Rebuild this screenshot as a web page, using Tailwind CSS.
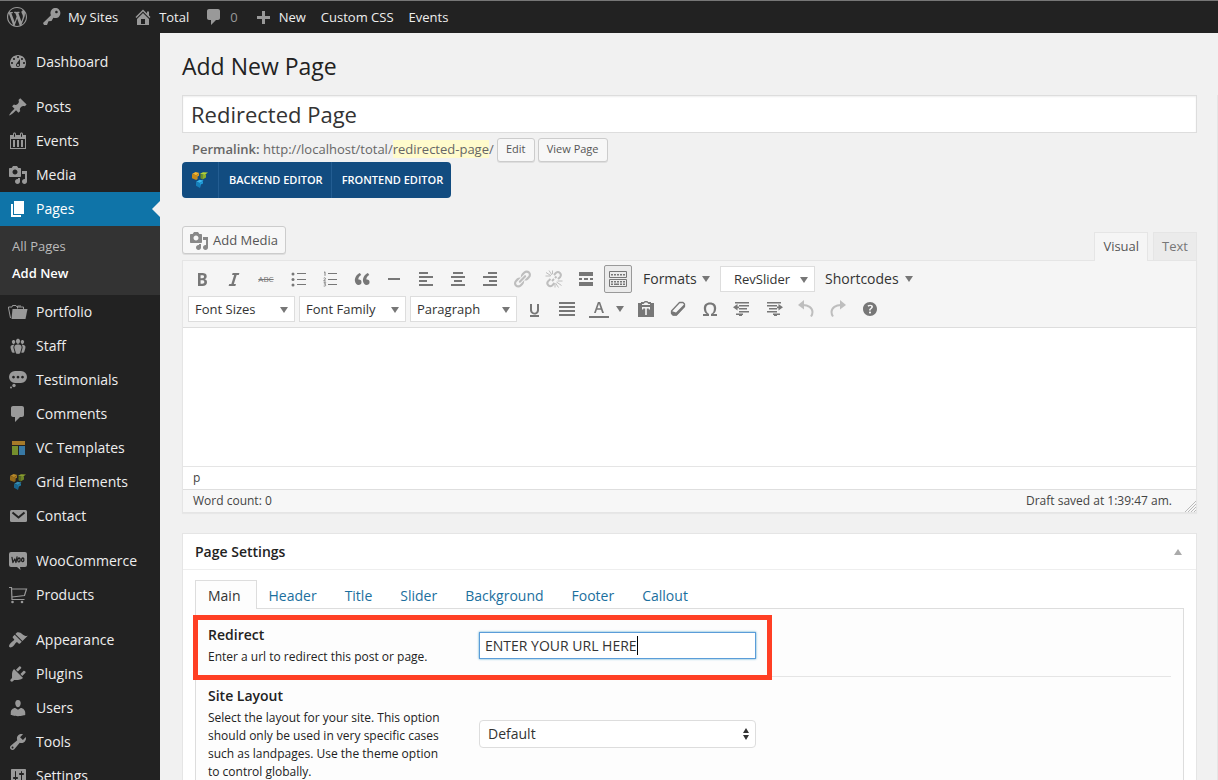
<!DOCTYPE html>
<html lang="en">
<head>
<meta charset="utf-8">
<meta name="viewport" content="width=device-width, initial-scale=1">
<title>Add New Page</title>
<script src="https://cdn.jsdelivr.net/npm/@tailwindcss/browser@4"></script>
</head>
<body class="h-screen overflow-hidden bg-[#f1f1f1] font-['Open_Sans',sans-serif] text-[13px] text-[#444] flex flex-col">

<svg class="hidden" aria-hidden="true">
  <symbol id="i-media" viewBox="0 0 20 20"><path fill-rule="evenodd" d="M13 11V4c0-.55-.45-1-1-1h-1.670L9 1H5L3.670 3H2c-.55 0-1 .45-1 1v7c0 .55.45 1 1 1h10c.55 0 1-.45 1-1zM7 4.500c1.380 0 2.500 1.120 2.500 2.500S8.380 9.500 7 9.500 4.500 8.380 4.500 7 5.620 4.500 7 4.500zM14 6h5v10.500c0 1.380-1.120 2.500-2.500 2.500S14 17.880 14 16.500s1.120-2.500 2.500-2.500c.17 0 .34.02.5.05V9h-3V6zm-4 8.050V13h2v3.500c0 1.380-1.120 2.500-2.500 2.500S7 17.880 7 16.500 8.120 14 9.500 14c.17 0 .34.02.5.05z"/></symbol>
  <symbol id="i-comment" viewBox="0 0 20 20"><path d="M5 2h9c1.100 0 2 .9 2 2v7c0 1.100-.9 2-2 2h-2l-5 5v-5H5c-1.100 0-2-.9-2-2V4c0-1.100.9-2 2-2z"/></symbol>
  <symbol id="i-down" viewBox="0 0 10 8"><path d="M1 1h8L5 7z"/></symbol>
  <symbol id="i-vc" viewBox="0 0 20 20">
    <path fill="#f7b52c" d="M2 4l3.500-2L9.500 3 6.200 5.200z"/><path fill="#c98a17" d="M2 4l4.200 1.200V10L2 8.200z"/><path fill="#e09c1c" d="M6.200 5.200L9 3.400v2.400L7.500 6.600V9l-1.300 1z"/>
    <path fill="#b5d335" d="M10 3.800L13 2.200l5 .2L14.500 5z"/><path fill="#6f8f1f" d="M10.500 4L12.500 4.600v5l-2-1.400z"/><path fill="#8fae2a" d="M12.500 4.600l2 .4L16 4v3.500L12.500 9.600z"/>
    <path fill="#39b8ef" d="M6 12l3.500-2.200 4 .7L10 13z"/><path fill="#1580bb" d="M6 12l4 1v5l-4-2.200z"/><path fill="#1e9bd8" d="M10 13l3-2v2.500L10.800 14.500 10 18z"/>
  </symbol>
</svg>

<header class="shrink-0 h-[33px] bg-[#222] border-t border-[#777] flex items-center gap-[15px] pl-[7px] text-[13px] leading-[21px] font-medium text-[#eee]">
  <a href="#" aria-label="About WordPress" class="text-[#999]"><svg class="size-5 fill-current" viewBox="0 0 20 20"><path fill-rule="evenodd" d="M20 10c0-5.510-4.490-10-10-10C4.480 0 0 4.490 0 10c0 5.520 4.480 10 10 10 5.510 0 10-4.480 10-10zM7.780 15.370L4.370 6.220c.55-.02 1.170-.08 1.170-.08.5-.06.44-1.130-.06-1.110 0 0-1.450.11-2.370.11-.18 0-.37 0-.58-.01C4.120 2.690 6.870 1.110 10 1.110c2.330 0 4.450.87 6.050 2.340-.68-.11-1.650.39-1.650 1.580 0 .74.45 1.360.9 2.100.35.61.55 1.360.55 2.460 0 1.490-1.400 5-1.400 5l-3.030-8.370c.54-.02.82-.17.82-.17.5-.05.44-1.250-.06-1.220 0 0-1.440.12-2.380.12-.87 0-2.330-.12-2.330-.12-.5-.03-.56 1.200-.06 1.220l.92.08 1.260 3.410zM17.410 10c.24-.64.74-1.870.43-4.250.7 1.290 1.050 2.710 1.050 4.250 0 3.290-1.730 6.240-4.400 7.780.97-2.590 1.940-5.200 2.920-7.780zM6.100 18.090C3.120 16.650 1.110 13.530 1.110 10c0-1.300.23-2.480.72-3.590C3.250 10.300 4.670 14.200 6.100 18.090zm4.030-6.630l2.580 6.980c-.86.29-1.760.45-2.710.45-.79 0-1.570-.11-2.290-.33.81-2.380 1.620-4.740 2.420-7.100z"/></svg></a>
  <a href="#" class="flex items-center gap-1.5"><svg class="size-5 fill-[#999]" viewBox="0 0 20 20"><path fill-rule="evenodd" d="M16.950 2.580c1.960 1.950 1.960 5.120 0 7.070-1.510 1.510-3.750 1.840-5.590 1.010l-1.870 3.310-2.990.31L5 18H2l-1-2 7.950-7.690c-.92-1.870-.62-4.180.93-5.730 1.950-1.960 5.120-1.960 7.070 0zm-2.510 3.790c.74 0 1.330-.6 1.330-1.340 0-.73-.59-1.330-1.330-1.330-.73 0-1.330.6-1.330 1.330 0 .74.6 1.340 1.330 1.340z"/></svg>My Sites</a>
  <a href="#" class="flex items-center gap-1.5"><svg class="size-5 fill-[#999]" viewBox="0 0 20 20"><path fill-rule="evenodd" d="M16 8.500l1.530 1.530-1.060 1.060L10 4.600l-6.470 6.490-1.060-1.060L10 2.500l4 4v-2h2v4zm-6-2.460l6 5.990V18H4v-5.970zM12 17v-5H8v5h4z"/></svg>Total</a>
  <a href="#" class="flex items-center gap-1.5 text-[#999]"><svg class="size-5 fill-current" viewBox="0 0 20 20"><use href="#i-comment"/></svg>0</a>
  <a href="#" class="flex items-center gap-1.5"><svg class="size-5 fill-[#999]" viewBox="0 0 20 20"><path d="M9 4h3v5h5v3h-5v5H9v-5H4V9h5z"/></svg>New</a>
  <a href="#">Custom CSS</a>
  <a href="#">Events</a>
</header>

<div class="flex flex-1 min-h-0 overflow-hidden">
  <nav aria-label="Admin menu" class="w-40 shrink-0 bg-[#222] pt-3 text-[14px] leading-5 font-medium text-[#eee] fill-[#999]">
    <a href="#" class="flex items-center gap-2 h-[34px] pl-2"><svg class="size-5" viewBox="0 0 20 20"><path fill-rule="evenodd" d="M3.760 16h12.480c1.100-1.370 1.760-3.110 1.760-5 0-4.420-3.580-8-8-8s-8 3.580-8 8c0 1.890.66 3.630 1.760 5zM10 4c.55 0 1 .45 1 1s-.45 1-1 1-1-.45-1-1 .45-1 1-1zM6 6c.55 0 1 .45 1 1s-.45 1-1 1-1-.45-1-1 .45-1 1-1zm8 0c.55 0 1 .45 1 1s-.45 1-1 1-1-.45-1-1 .45-1 1-1zm-5.370 5.550L12 7v6c0 1.100-.9 2-2 2s-2-.9-2-2c0-.57.24-1.080.63-1.450zM4 10c.55 0 1 .45 1 1s-.45 1-1 1-1-.45-1-1 .45-1 1-1zm12 0c.55 0 1 .45 1 1s-.45 1-1 1-1-.45-1-1 .45-1 1-1zm-5 3c0-.55-.45-1-1-1s-1 .45-1 1 .45 1 1 1 1-.45 1-1z"/></svg>Dashboard</a>
    <a href="#" class="mt-[11px] flex items-center gap-2 h-[34px] pl-2"><svg class="size-5" viewBox="0 0 20 20"><path d="M10.440 3.020l1.820-1.820 6.360 6.350-1.830 1.820c-1.050-.68-2.480-.57-3.410.36l-.75.75c-.92.93-1.040 2.350-.35 3.410l-1.830 1.820-2.410-2.410-2.800 2.790c-.42.42-3.380 2.710-3.800 2.290s1.860-3.390 2.280-3.810l2.790-2.790L4.100 9.360l1.830-1.820c1.050.69 2.480.57 3.400-.36l.75-.75c.93-.92 1.050-2.350.36-3.410z"/></svg>Posts</a>
    <a href="#" class="flex items-center gap-2 h-[34px] pl-2"><svg class="size-5" viewBox="0 0 20 20"><path fill-rule="evenodd" d="M15 4h3v14H2V4h3V3c0-.83.67-1.500 1.500-1.500S8 2.170 8 3v1h4V3c0-.83.67-1.500 1.500-1.500S15 2.170 15 3v1zM6 3v2.500c0 .28.22.5.5.5s.5-.22.5-.5V3c0-.28-.22-.5-.5-.5S6 2.720 6 3zm7 0v2.500c0 .28.22.5.5.5s.5-.22.5-.5V3c0-.28-.22-.5-.5-.5s-.5.22-.5.5zm4 14V8H3v9h14zM7 16V9H5v7h2zm4 0V9H9v7h2zm4 0V9h-2v7h2z"/></svg>Events</a>
    <a href="#" class="flex items-center gap-2 h-[34px] pl-2"><svg class="size-5"><use href="#i-media"/></svg>Media</a>
    <a href="#" aria-current="page" class="relative flex items-center gap-2 h-[34px] pl-2 bg-[#0f74a8] text-white"><svg class="size-5 fill-white" viewBox="0 0 20 20"><path d="M6 15V2h10v13H6zm-1 1h8v2H3V5h2v11z"/></svg>Pages
      <svg class="absolute right-0 top-[9px] w-2 h-4 fill-[#f1f1f1]" viewBox="0 0 8 16"><path d="M8 0v16L0 8z"/></svg></a>
    <div class="bg-[#333] h-[69px] pt-[7px] pl-3 text-[13px] leading-[27px]">
      <a href="#" class="block text-[#bbb]">All Pages</a>
      <a href="#" class="block text-white font-semibold">Add New</a>
    </div>
    <a href="#" class="flex items-center gap-2 h-[34px] pl-2"><svg class="size-5" viewBox="0 0 20 20"><path d="M4.500 7H19.500L17.500 17H3.500z"/><path fill="none" stroke="#999" d="M2.500 16L.5 6V5H4l.5-1.500H8L9 5h6.500V7M9.500 6.500V4H13"/></svg>Portfolio</a>
    <a href="#" class="flex items-center gap-2 h-[34px] pl-2"><svg class="size-5" viewBox="0 0 20 20"><path d="M8.030 4.460c-.29 1.280.55 3.460 1.970 3.460 1.410 0 2.250-2.180 1.960-3.460-.22-.98-1.080-1.630-1.960-1.630-.89 0-1.740.65-1.970 1.630zm-4.130.9c-.25 1.080.47 2.930 1.670 2.930s1.920-1.850 1.670-2.930c-.19-.83-.92-1.390-1.670-1.390s-1.480.56-1.670 1.390zm8.860 0c-.25 1.080.47 2.930 1.660 2.930 1.200 0 1.920-1.850 1.670-2.930-.19-.83-.92-1.390-1.670-1.390-.74 0-1.470.56-1.660 1.390zm-.59 11.430l1.250-4.300C14.200 10 12.710 8.470 10 8.470c-2.720 0-4.210 1.530-3.440 4.020l1.260 4.300C8.050 17.510 9 18 10 18c.98 0 1.940-.49 2.170-1.210zm-6.100-7.630c-.49.67-.96 1.830-.42 3.590l1.120 3.790c-.34.2-.77.31-1.200.31-.85 0-1.650-.41-1.850-1.030l-1.070-3.650c-.65-2.110.61-3.400 2.920-3.400.27 0 .54.02.79.06-.1.1-.2.22-.29.33zm8.350-.39c2.310 0 3.580 1.290 2.920 3.400l-1.070 3.650c-.2.62-1 1.030-1.850 1.030-.43 0-.86-.11-1.200-.31l1.110-3.770c.55-1.780.08-2.940-.42-3.610-.08-.11-.18-.23-.28-.33.25-.04.51-.06.79-.06z"/></svg>Staff</a>
    <a href="#" class="flex items-center gap-2 h-[34px] pl-2"><svg class="size-5" viewBox="0 0 20 20"><path fill-rule="evenodd" d="M7 1h6a6 6 0 0 1 6 6 6 6 0 0 1-6 6H7a6 6 0 0 1-6-6 6 6 0 0 1 6-6zM5.500 5.700a1.400 1.400 0 1 0 .01 0zm4.500 0a1.400 1.400 0 1 0 .01 0zm4.500 0a1.400 1.400 0 1 0 .01 0z"/><circle cx="6" cy="15.500" r="1.700"/><circle cx="3" cy="17.500" r="1"/></svg>Testimonials</a>
    <a href="#" class="flex items-center gap-2 h-[34px] pl-2"><svg class="size-5"><use href="#i-comment"/></svg>Comments</a>
    <a href="#" class="flex items-center gap-2 h-[34px] pl-2"><svg class="size-5" viewBox="0 0 20 20"><path fill="#a57a29" d="M4 3h13v4H4z"/><path fill="#758f2d" d="M4 8h6v9H4z"/><path fill="#3879a5" d="M11 8h6v9h-6z"/></svg>VC Templates</a>
    <a href="#" class="flex items-center gap-2 h-[34px] pl-2"><svg class="size-5 opacity-70"><use href="#i-vc"/></svg>Grid Elements</a>
    <a href="#" class="flex items-center gap-2 h-[34px] pl-2"><svg class="size-5" viewBox="0 0 20 20"><rect x="2" y="4" width="17" height="12" rx="1.500"/><path fill="none" stroke="#222" stroke-width="2" d="M4.500 6.500l6 5 6-5"/></svg>Contact</a>
    <a href="#" class="mt-[11px] flex items-center gap-2 h-[34px] pl-2"><svg class="size-5" viewBox="0 0 20 20"><path d="M3 1h14a2 2 0 0 1 2 2v11a2 2 0 0 1-2 2h-5l.5 3L9 16H3a2 2 0 0 1-2-2V3a2 2 0 0 1 2-2z"/><path fill="none" stroke="#222" stroke-width="1.300" stroke-linecap="round" stroke-linejoin="round" d="M4 6.500l.9 5L6.800 8l1.200 3.500L9 6M11.300 7c-1.300 0-1.900 1.500-1.400 3 .5 1.300 1.900 1 2.200-.5.200-1.300 0-2.300-.8-2.500zM15 7c-1.300 0-1.700 1.500-1.300 2.700.5 1.300 1.900 1 2.100-.4.200-1.200 0-2.100-.8-2.300z"/></svg>WooCommerce</a>
    <a href="#" class="flex items-center gap-2 h-[34px] pl-2"><svg class="size-5" viewBox="0 0 20 20"><path fill="none" stroke="#999" stroke-width="1.200" d="M1 2.500h2.500L4 14.500h12.500M4 4h14.500l-2 6.500-12.500 1.500"/><circle cx="4.500" cy="17" r="1.300"/><circle cx="14" cy="17" r="1.300"/></svg>Products</a>
    <a href="#" class="mt-[11px] flex items-center gap-2 h-[34px] pl-2"><svg class="size-5" viewBox="0 0 20 20"><path d="M14.480 11.060L7.410 3.990l1.500-1.500c.5-.56 2.300-.47 3.510.32 1.210.8 1.430 1.280 2.910 2.100 1.180.64 2.450 1.260 4.450.85zm-.71.71L6.700 4.700 4.930 6.470c-.39.39-.39 1.020 0 1.410l1.060 1.060c.39.39.39 1.030 0 1.420-.6.6-1.430 1.110-2.210 1.690-.35.26-.7.53-1.010.84C1.430 14.230.4 16.080 1.400 17.070c.99 1 2.840-.03 4.180-1.360.31-.31.58-.66.85-1.020.57-.78 1.080-1.610 1.690-2.210.39-.39 1.020-.39 1.410 0l1.060 1.060c.39.39 1.020.39 1.410 0z"/></svg>Appearance</a>
    <a href="#" class="flex items-center gap-2 h-[34px] pl-2"><svg class="size-5" viewBox="0 0 20 20"><path d="M13.110 4.360L9.870 7.600 8 5.730l3.240-3.240c.35-.34 1.050-.2 1.560.32.52.51.66 1.210.31 1.550zm-8 1.770l.91-1.120 9.010 9.010-1.190.84c-.71.71-2.630 1.160-3.820 1.160H6.140L4.900 17.260c-.59.59-1.540.59-2.120 0-.59-.58-.59-1.530 0-2.120l1.240-1.240v-3.880c0-1.130.4-3.190 1.090-3.890zm7.260 3.970l3.240-3.240c.34-.35 1.040-.21 1.550.31.52.51.66 1.210.31 1.550l-3.240 3.250z"/></svg>Plugins</a>
    <a href="#" class="flex items-center gap-2 h-[34px] pl-2"><svg class="size-5" viewBox="0 0 20 20"><path d="M10 9.250c-2.270 0-2.730-3.440-2.730-3.440C7 4.020 7.820 2 9.970 2c2.160 0 2.980 2.020 2.710 3.810 0 0-.41 3.440-2.680 3.440zm0 2.570L12.720 10c2.390 0 4.520 2.330 4.520 4.530v2.490s-3.650 1.130-7.240 1.130c-3.650 0-7.240-1.130-7.240-1.130v-2.490c0-2.250 1.940-4.480 4.470-4.480z"/></svg>Users</a>
    <a href="#" class="flex items-center gap-2 h-[34px] pl-2"><svg class="size-5" viewBox="0 0 20 20"><path fill-rule="evenodd" d="M16.680 9.770c-1.340 1.340-3.300 1.670-4.950.99l-5.410 6.520c-.99.99-2.590.99-3.580 0s-.99-2.590 0-3.570l6.520-5.420c-.68-1.650-.35-3.610.99-4.950 1.280-1.280 3.120-1.620 4.720-1.060l-2.890 2.890 2.820 2.820 2.860-2.870c.53 1.580.18 3.390-1.080 4.650zM3.810 16.210c.4.39 1.040.39 1.430 0 .4-.4.4-1.040 0-1.430-.39-.4-1.030-.4-1.430 0-.39.39-.39 1.030 0 1.430z"/></svg>Tools</a>
    <a href="#" class="flex items-center gap-2 h-[34px] pl-2"><svg class="size-5" viewBox="0 0 20 20"><path fill-rule="evenodd" d="M18 16V4c0-.55-.45-1-1-1H4c-.55 0-1 .45-1 1v12c0 .55.45 1 1 1h13c.55 0 1-.45 1-1zM8 11h1c.55 0 1 .45 1 1s-.45 1-1 1H8v1.500c0 .28-.22.5-.5.5s-.5-.22-.5-.5V13H6c-.55 0-1-.45-1-1s.45-1 1-1h1V5.500c0-.28.22-.5.5-.5s.5.22.5.5V11zm5-2h-1c-.55 0-1-.45-1-1s.45-1 1-1h1V5.500c0-.28.22-.5.5-.5s.5.22.5.5V7h1c.55 0 1 .45 1 1s-.45 1-1 1h-1v5.500c0 .28-.22.5-.5.5s-.5-.22-.5-.5V9z"/></svg>Settings</a>
  </nav>

  <main class="flex-1 min-w-0 pl-[22px] pt-[18px]">
    <h1 class="text-[23px] leading-[30px] text-[#222] mb-[14px]">Add New Page</h1>
    <div class="flex gap-5">
      <div class="flex-1 min-w-0">
        <input type="text" aria-label="Page title" value="Redirected Page" class="block w-full h-[38px] px-2 bg-white border border-[#ddd] text-[22px] text-[#333] shadow-[inset_0_1px_2px_rgba(0,0,0,0.07)]">
        <div class="flex items-center h-[29px] pt-1 pl-2.5 text-[#666]">
          <span><strong class="font-semibold">Permalink:</strong> http://localhost/total/<span class="bg-[#fffbcc]">redirected-page</span>/</span>
          <button type="button" class="ml-[3px] h-6 min-w-[38px] px-2 rounded-[3px] border border-[#ccc] bg-[#f7f7f7] text-[11px] text-[#555] shadow-[0_1px_0_rgba(0,0,0,0.08)]">Edit</button>
          <button type="button" class="ml-[3px] h-6 px-2 rounded-[3px] border border-[#ccc] bg-[#f7f7f7] text-[11px] text-[#555] shadow-[0_1px_0_rgba(0,0,0,0.08)]">View Page</button>
        </div>
        <div class="inline-flex h-9 rounded-[4px] bg-[#124c80] text-white text-[11px] font-semibold overflow-hidden align-top">
          <a href="#" aria-label="Visual Composer" class="w-9 flex items-center justify-center"><svg class="size-5"><use href="#i-vc"/></svg></a>
          <button type="button" class="pl-2.5 pr-2 border-l border-[#235d92]">BACKEND EDITOR</button>
          <button type="button" class="pl-2.5 pr-2 border-l border-[#235d92]">FRONTEND EDITOR</button>
        </div>

        <div class="flex items-end justify-between h-[62px]">
          <button type="button" class="mb-[6px] h-7 flex items-center gap-1 pt-px pl-1.5 pr-[7px] rounded-[3px] border border-[#ccc] bg-[#f7f7f7] text-[13px] text-[#555] shadow-[0_1px_0_rgba(0,0,0,0.08)]"><svg class="size-5 fill-[#888]"><use href="#i-media"/></svg>Add Media</button>
          <div class="flex gap-[5px] text-[13px]">
            <button type="button" class="relative z-10 -mb-px h-[29px] px-2 border border-b-0 border-[#e5e5e5] bg-[#f5f5f5] text-[#555]">Visual</button>
            <button type="button" class="h-7 px-2 border border-b-0 border-[#e5e5e5] bg-[#ebebeb] text-[#777]">Text</button>
          </div>
        </div>

        <section aria-label="Editor" class="border border-[#e5e5e5] bg-white shadow-[0_1px_1px_rgba(0,0,0,0.04)]">
          <div class="flex flex-col gap-0.5 bg-[#f5f5f5] border-b border-[#ddd] py-1 pl-[5px] text-[13px] text-[#333] fill-[#777] stroke-[#777]">
            <div class="flex items-center gap-1 h-7">
              <button type="button" aria-label="Bold" class="size-7 grid place-items-center"><svg class="size-5" viewBox="0 0 20 20"><path stroke="none" fill-rule="evenodd" d="M6 4v13h4.540c1.370 0 2.460-.33 3.260-1 .8-.66 1.200-1.580 1.200-2.770 0-.84-.17-1.510-.51-2.010s-.9-.85-1.670-1.030v-.09c.57-.1 1.020-.4 1.360-.9s.51-1.130.51-1.910c0-1.140-.39-1.980-1.170-2.500C12.750 4.260 11.500 4 9.780 4H6zm2.570 5.150V6.260h1.360c.73 0 1.270.11 1.610.32.34.22.51.58.51 1.070 0 .54-.16.92-.47 1.150s-.82.35-1.510.35h-1.500zm0 2.190h1.600c1.440 0 2.160.53 2.160 1.610 0 .6-.17 1.050-.51 1.340s-.86.43-1.570.43H8.570v-3.380z"/></svg></button>
              <button type="button" aria-label="Italic" class="size-7 grid place-items-center"><svg class="size-5" viewBox="0 0 20 20"><path stroke="none" d="M14.780 6h-2.130l-2.800 9h2.120l-.62 2H4.600l.62-2h2.140l2.800-9H8.030l.62-2h6.750z"/></svg></button>
              <button type="button" aria-label="Strikethrough" class="size-7 text-[8px] font-medium text-[#777] line-through">ABC</button>
              <button type="button" aria-label="Bulleted list" class="size-7 grid place-items-center"><svg class="size-5" viewBox="0 0 20 20"><g stroke="none"><circle cx="5" cy="5" r="1.500"/><circle cx="5" cy="10.500" r="1.500"/><circle cx="5" cy="16" r="1.500"/><path d="M9 4h9v1H9zM9 10h9v1H9zM9 15h9v1H9z"/></g></svg></button>
              <button type="button" aria-label="Numbered list" class="size-7 grid place-items-center"><svg class="size-5" viewBox="0 0 20 20"><path stroke="none" d="M8 4h9v1H8zM8 10h9v1H8zM8 15h9v1H8z"/><path fill="none" stroke-width=".9" d="M4 3.500l1-.7v4M3.700 9.200c1-.9 2.200-.2 1.600.8L3.700 12h2.200M3.700 13.700h2L4.500 15.200c2 0 1.700 2.300-.8 1.800"/></svg></button>
              <button type="button" aria-label="Blockquote" class="size-7 grid place-items-center"><svg class="size-5" viewBox="0 0 20 20"><path stroke="none" d="M9.490 13.220c0-.74-.2-1.380-.61-1.900-.62-.78-1.830-.88-2.530-.72-.29-1.650 1.110-3.750 2.920-4.650L7.880 4c-2.730 1.300-5.420 4.280-4.960 8.050C3.210 14.430 4.590 16 6.540 16c.85 0 1.560-.25 2.120-.75s.83-1.180.83-2.030zm8.050 0c0-.74-.2-1.380-.61-1.900-.63-.78-1.830-.88-2.530-.72-.29-1.650 1.110-3.750 2.920-4.650L15.930 4c-2.730 1.300-5.410 4.280-4.950 8.050.29 2.380 1.660 3.950 3.610 3.950.85 0 1.560-.25 2.120-.75s.83-1.180.83-2.030z"/></svg></button>
              <button type="button" aria-label="Horizontal line" class="size-7 grid place-items-center"><svg class="size-5" viewBox="0 0 20 20"><path stroke="none" d="M4 9h12v2H4z"/></svg></button>
              <button type="button" aria-label="Align left" class="size-7 grid place-items-center"><svg class="size-5" viewBox="0 0 20 20"><path stroke="none" d="M3 3h9v2H3zM3 7h14v2H3zM3 11h8v2H3zM3 15h14v2H3z"/></svg></button>
              <button type="button" aria-label="Align center" class="size-7 grid place-items-center"><svg class="size-5" viewBox="0 0 20 20"><path stroke="none" d="M5 3h10v2H5zM3 7h14v2H3zM6 11h8v2H6zM3 15h14v2H3z"/></svg></button>
              <button type="button" aria-label="Align right" class="size-7 grid place-items-center"><svg class="size-5" viewBox="0 0 20 20"><path stroke="none" d="M8 3h9v2H8zM3 7h14v2H3zM9 11h8v2H9zM3 15h14v2H3z"/></svg></button>
              <button type="button" aria-label="Insert link" class="size-7 grid place-items-center fill-[#bebebe]"><svg class="size-5" viewBox="0 0 20 20"><path stroke="none" fill-rule="evenodd" d="M17.740 2.760c1.680 1.690 1.680 4.410 0 6.100l-1.530 1.520c-1.120 1.120-2.700 1.470-4.140 1.090l2.620-2.610.76-.77.76-.76c.84-.84.84-2.200 0-3.040-.84-.85-2.200-.85-3.040 0l-.77.76-3.380 3.380c-.37-1.440-.02-3.020 1.100-4.140l1.520-1.530c1.690-1.680 4.420-1.680 6.100 0zM8.590 13.430l5.340-5.340c.42-.42.42-1.100 0-1.520-.44-.43-1.130-.39-1.530 0l-5.330 5.340c-.42.42-.42 1.100 0 1.520.44.43 1.130.39 1.520 0zm-.76 2.290l4.140-4.150c.38 1.440.03 3.020-1.090 4.140l-1.520 1.530c-1.690 1.680-4.410 1.680-6.100 0-1.680-1.680-1.680-4.420 0-6.100l1.530-1.520c1.120-1.120 2.700-1.470 4.140-1.100l-4.140 4.150c-.85.84-.85 2.200 0 3.050.84.84 2.200.84 3.040 0z"/></svg></button>
              <button type="button" aria-label="Remove link" class="size-7 grid place-items-center stroke-[#bebebe]"><svg class="size-5" viewBox="0 0 20 20"><g fill="none"><path stroke-width="2" d="M10 6l2-2.200a3 3 0 0 1 4.200 4.200L14 10M6.500 10L4 12.300a3 3 0 0 0 4.200 4.200L10.500 14M8 12l2-2M11 9l1.500-1.500"/><path stroke-width="1" d="M2 3.500l5 3.200M5 1.500l3 4.500M8.500 1.500v3.500M1.500 7h5M11.500 14l3 4.500M12.500 13l5 3.500M13.500 12h5M11 15v3.500"/></g></svg></button>
              <button type="button" aria-label="Read more tag" class="size-7 grid place-items-center"><svg class="size-5" viewBox="0 0 20 20"><path stroke="none" d="M3 3h14v4H3zM3 9h3v2H3zM8 9h4v2H8zM14 9h3v2h-3zM3 13h14v4H3z"/></svg></button>
              <button type="button" aria-label="Toolbar toggle" aria-pressed="true" class="size-7 grid place-items-center border border-[#999] rounded-[2px] bg-[#ebebeb]"><svg class="size-5" viewBox="0 0 20 20"><path fill="none" d="M1.500 2.500h17v6h-17zM1.500 10.500h17v7h-17z"/><path stroke="none" d="M3 5h2v1.500H3zM6 5h2v1.500H6zM9 5h2v1.500H9zM12 5h2v1.500h-2zM15 5h2v1.500h-2zM3 12h2v1.500H3zM6 12h2v1.500H6zM9 12h2v1.500H9zM12 12h2v1.500h-2zM15 12h2v1.500h-2zM3 14.500h2V16H3zM6 14.500h5V16H6zM12 14.500h2V16h-2zM15 14.500h2V16h-2z"/></svg></button>
              <button type="button" class="w-20 h-7 flex items-center justify-between pl-[7px] pr-[5px] text-[14px] leading-5">Formats<svg class="w-2.5 h-2 stroke-none"><use href="#i-down"/></svg></button>
              <button type="button" class="w-[95px] h-[26px] flex items-center justify-between pt-0.5 pl-[13px] pr-[5px] border border-[#ddd] bg-white">RevSlider<svg class="w-2.5 h-2 stroke-none"><use href="#i-down"/></svg></button>
              <button type="button" class="w-[101px] h-7 flex items-center justify-between pl-1.5 pr-1.5 text-[14px] leading-5">Shortcodes<svg class="w-2.5 h-2 stroke-none"><use href="#i-down"/></svg></button>
            </div>
            <div class="flex items-center gap-1 h-7">
              <button type="button" class="w-[107px] h-[26px] flex items-center justify-between pt-0.5 pl-1.5 pr-[5px] border border-[#ddd] bg-white">Font Sizes<svg class="w-2.5 h-2 stroke-none"><use href="#i-down"/></svg></button>
              <button type="button" class="w-[107px] h-[26px] flex items-center justify-between pt-0.5 pl-1.5 pr-[5px] border border-[#ddd] bg-white">Font Family<svg class="w-2.5 h-2 stroke-none"><use href="#i-down"/></svg></button>
              <button type="button" class="w-[107px] h-[26px] flex items-center justify-between pt-0.5 pl-1.5 pr-[5px] border border-[#ddd] bg-white">Paragraph<svg class="w-2.5 h-2 stroke-none"><use href="#i-down"/></svg></button>
              <button type="button" aria-label="Underline" class="size-7 grid place-items-center"><svg class="size-5" viewBox="0 0 20 20"><path stroke="none" d="M14 5h-2v5.710c0 1.990-1.120 2.980-2.450 2.980-1.320 0-2.550-1-2.550-2.960V5H5v5.870c0 1.910 1 4.540 4.480 4.540 3.490 0 4.520-2.580 4.520-4.500V5zm0 13v-2H5v2h9z"/></svg></button>
              <button type="button" aria-label="Justify" class="size-7 grid place-items-center"><svg class="size-5" viewBox="0 0 20 20"><path stroke="none" d="M2 3h16v2H2zM2 7h16v2H2zM2 11h16v2H2zM2 15h16v2H2z"/></svg></button>
              <button type="button" aria-label="Text color" class="w-[43px] h-7 flex items-center justify-between pl-1 pr-[3px]"><svg class="size-5" viewBox="0 0 20 20"><path stroke="none" fill-rule="evenodd" d="M8.900 3h2.200L15 14h-1.900l-1.100-3.200H7.900L6.800 14H5zM10 4.800L8.400 9.300h3.100zM0 17h20v2H0z"/></svg><svg class="w-2.5 h-2 stroke-none"><use href="#i-down"/></svg></button>
              <button type="button" aria-label="Paste as text" class="size-7 grid place-items-center"><svg class="size-5" viewBox="0 0 20 20"><path stroke="none" fill-rule="evenodd" d="M2 4h3V3h3l.5-1h3l.5 1h3v1h3v14H2zM6 5v1h8V5h-1.500L11 3.500H9L7.500 5zM6 8v2.500h1.200V9.500h2V16h1.600V9.500h2v1H14V8z"/></svg></button>
              <button type="button" aria-label="Clear formatting" class="size-7 grid place-items-center"><svg class="size-5" viewBox="0 0 20 20"><path fill="none" stroke-width="1.300" stroke-linejoin="round" d="M3.500 12L11.500 3.500h3.500L16.500 5v2.500L8.500 16H5L3.500 14.500z"/><path stroke="none" d="M3.500 12L8 13.500 16.500 5v3L8.500 16.500H5L3.500 14.500z"/></svg></button>
              <button type="button" aria-label="Special character" class="size-7 grid place-items-center"><svg class="size-5" viewBox="0 0 20 20"><path stroke="none" d="M10 5.400c1.270 0 2.240.36 2.910 1.080.66.71 1 1.760 1 3.130 0 1.280-.23 2.370-.69 3.270-.47.89-1.270 1.520-2.220 2.120v2h6v-2h-3.690c.92-.64 1.620-1.340 2.120-2.340.49-1.010.74-2.130.74-3.350 0-1.780-.55-3.190-1.650-4.220S11.920 3.540 10 3.540s-3.430.53-4.520 1.570c-1.100 1.040-1.650 2.440-1.650 4.200 0 1.210.24 2.310.73 3.330.48 1.010 1.190 1.710 2.100 2.360H3v2h6v-2c-.98-.64-1.800-1.280-2.240-2.170-.45-.89-.67-1.960-.67-3.220 0-1.370.33-2.410 1-3.130C7.750 5.760 8.720 5.400 10 5.400z"/></svg></button>
              <button type="button" aria-label="Decrease indent" class="size-7 grid place-items-center"><svg class="size-5" viewBox="0 0 20 20"><path stroke="none" d="M3 3h14v1.500H3zM7 6h10v1.500H7zM7 9h8v1.500H7zM7 12h10v1.500H7zM4 14.500h7V16H4zM7 15.500h3V17H7zM5.500 7.500V5L1 8.300l4.500 3.300V9.200H7V7.500z"/></svg></button>
              <button type="button" aria-label="Increase indent" class="size-7 grid place-items-center"><svg class="size-5" viewBox="0 0 20 20"><path stroke="none" d="M3 3h14v1.500H3zM3 6h10v1.500H3zM5 9h8v1.500H5zM3 12h10v1.500H3zM9 14.500h7V16H9zM10 15.500h3V17h-3zM14.500 7.500V5L19 8.300l-4.500 3.300V9.200H13V7.500z"/></svg></button>
              <button type="button" aria-label="Undo" class="size-7 grid place-items-center fill-[#bebebe] stroke-[#bebebe]"><svg class="size-5" viewBox="0 0 20 20"><path stroke="none" d="M8 1v9.500L2 6z"/><path fill="none" stroke-width="2" d="M7 6c5 0 9.500 2.500 9.500 7 0 2-.8 3.500-1.500 4.500"/></svg></button>
              <button type="button" aria-label="Redo" class="size-7 grid place-items-center fill-[#bebebe] stroke-[#bebebe]"><svg class="size-5" viewBox="0 0 20 20"><path stroke="none" d="M12 1v9.500L18 6z"/><path fill="none" stroke-width="2" d="M13 6c-5 0-9.500 2.500-9.500 7 0 2 .8 3.500 1.500 4.500"/></svg></button>
              <button type="button" aria-label="Keyboard shortcuts" class="size-7 grid place-items-center"><svg class="size-5" viewBox="0 0 20 20"><path stroke="none" fill-rule="evenodd" d="M17 10c0-3.870-3.140-7-7-7-3.870 0-7 3.130-7 7s3.130 7 7 7c3.860 0 7-3.130 7-7zm-6.300 1.480H9.140v-.43c0-.38.08-.7.24-.98s.46-.57.88-.89c.41-.29.68-.53.81-.71.14-.18.2-.39.2-.62 0-.25-.09-.44-.28-.58-.19-.13-.45-.19-.79-.19-.58 0-1.250.19-2 .57l-.64-1.280c.87-.49 1.800-.74 2.770-.74.81 0 1.450.2 1.920.58.48.39.71.91.71 1.550 0 .43-.09.8-.29 1.110-.19.32-.57.67-1.110 1.060-.38.28-.61.49-.71.63-.1.15-.15.34-.15.57v.35zm-1.470 2.740c-.18-.17-.27-.42-.27-.73 0-.33.08-.58.26-.75s.43-.25.77-.25c.32 0 .57.09.75.26s.27.42.27.74c0 .3-.09.55-.27.72-.18.18-.43.27-.75.27-.33 0-.58-.09-.76-.26z"/></svg></button>
            </div>
          </div>
          <textarea aria-label="Page content" class="block w-full h-[138px] resize-none"></textarea>
          <div class="border-t border-[#e5e5e5] h-[23px] pl-2.5 text-[12px] leading-[22px]">p</div>
          <div class="flex justify-between border-t border-[#dedede] bg-[#f7f7f7] h-[23px] pl-2.5 text-[12px] leading-[22px]">
            <span>Word count: 0</span>
            <span class="flex items-end">Draft saved at 1:39:47 am.<svg class="ml-3 size-3 stroke-[#aaa]" viewBox="0 0 12 12"><path fill="none" stroke-width=".8" d="M1 12L12 1M4 12l8-8M7 12l5-5M10 12l2-2"/></svg></span>
          </div>
        </section>

        <section class="mt-5 border border-[#e5e5e5] bg-white">
          <header class="flex items-center justify-between h-9 border-b border-[#eee] pl-3 pr-3.5">
            <h2 class="text-[14px] font-semibold text-[#222]">Page Settings</h2>
            <button type="button" aria-label="Toggle panel"><svg class="w-2 h-1.5 fill-[#aaa]" viewBox="0 0 8 6"><path d="M0 6h8L4 0z"/></svg></button>
          </header>
          <div class="px-3 pt-2.5">
            <nav aria-label="Page settings tabs" class="flex items-end gap-7 h-[29px] text-[14px] leading-[26px] text-[#1b6f9e]">
              <a href="#" aria-current="true" class="relative z-10 -mr-4 h-[29px] leading-[29px] border border-b-0 border-[#ddd] bg-[#fdfdfd] pl-3 pr-[15px] text-[#333]">Main</a>
              <a href="#">Header</a>
              <a href="#">Title</a>
              <a href="#">Slider</a>
              <a href="#">Background</a>
              <a href="#">Footer</a>
              <a href="#">Callout</a>
            </nav>
            <div class="relative -mt-px border border-[#ddd] bg-[#fdfdfd] px-3 pb-6 text-[#222]">
              <div class="grid grid-cols-[271px_277px] h-[68px] border-b border-[#e5e5e5] pt-4">
                <div>
                  <label for="redirect" class="block text-[14px] leading-5 font-semibold">Redirect</label>
                  <p class="mt-[3px] text-[12px] leading-[18px]">Enter a url to redirect this post or page.</p>
                </div>
                <div class="relative mt-[7px]">
                  <input id="redirect" type="text" value="ENTER YOUR URL HERE" class="block h-[27px] w-full px-[5px] bg-white border border-[#5b9dd9] text-[14px] leading-5 text-[#333] caret-transparent outline-none shadow-[0_0_2px_rgba(30,140,190,0.8)]">
                  <span class="absolute left-[158px] top-1 w-px h-[19px] bg-black pointer-events-none"></span>
                </div>
              </div>
              <div class="grid grid-cols-[271px_277px] pt-[9px]">
                <div>
                  <label for="layout" class="block text-[14px] leading-5 font-semibold">Site Layout</label>
                  <p class="mt-[3px] w-[240px] text-[12px] leading-[18px]">Select the layout for your site. This option should only be used in very specific cases such as landpages. Use the theme option to control globally.</p>
                </div>
                <div class="relative mt-[34px]">
                  <select id="layout" class="appearance-none block w-full h-7 pb-0.5 px-2 rounded-[4px] bg-white border border-[#ddd] text-[14px] text-[#333]"><option>Default</option></select>
                  <svg class="absolute right-1.5 top-2 w-2 h-3 fill-[#333] pointer-events-none" viewBox="0 0 8 12"><path d="M1 5h6L4 0zM1 7h6l-3 5z"/></svg>
                </div>
              </div>
              <div class="absolute left-[-3px] top-1.5 w-[579px] h-[65px] border-5 border-[#ff3f24] pointer-events-none"></div>
            </div>
          </div>
        </section>
      </div>
      <aside aria-label="Publish" class="w-px h-screen bg-[#e5e5e5]"></aside>
    </div>
  </main>
</div>
</body>
</html>
